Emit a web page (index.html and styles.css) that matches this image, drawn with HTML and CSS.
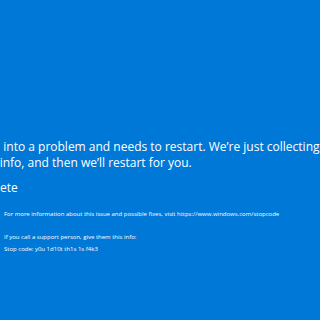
FILE: index.html
```html
<!DOCTYPE html>
<html lang="en">
  <head>
    <meta charset="UTF-8" />
    <meta name="viewport" content="width=device-width, initial-scale=1.0" />
    <title>Stop code</title>
    <link rel="stylesheet" href="styles.css">
  </head>
  <body>
    <main class="screen">
      <p class="message">
        <span>Your PC ran into a problem and needs to restart. We’re just collecting</span>
        <span>some error info, and then we’ll restart for you.</span>
      </p>
      <p class="progress"><span class="percent">100</span>% complete</p>
      <div class="info">
        <div class="qr"></div>
        <div class="details">
          <p>For more information about this issue and possible fixes, visit https://www.windows.com/stopcode</p>
          <p class="support">If you call a support person, give them this info:</p>
          <p>Stop code: y0u 1d10t th1s 1s f4k3</p>
        </div>
      </div>
    </main>
  </body>
</html>
```

FILE: styles.css
```css
* {
  margin: 0;
  padding: 0;
  box-sizing: border-box;
  font-family: "Open Sans", "Noto Sans", sans-serif;
}
html,
body {
  width: 320px;
  height: 320px;
  overflow: hidden;
}
body {
  background-color: #0078d7;
  color: white;
}
.screen {
  display: flex;
  flex-direction: column;
  margin-left: -66px;
  padding-top: 139px;
  white-space: nowrap;
}
.message {
  font-size: 12px;
  line-height: 16px;
}
.message span {
  display: block;
}
.progress {
  font-size: 12px;
  line-height: 16px;
  margin-top: 9px;
  margin-left: -2px;
}
.info {
  display: flex;
  gap: 6px;
  margin-top: 12px;
}
.qr {
  width: 64px;
  height: 64px;
}
.details p {
  font-size: 6px;
  line-height: 12px;
}
.details .support {
  margin-top: 11px;
}
```
